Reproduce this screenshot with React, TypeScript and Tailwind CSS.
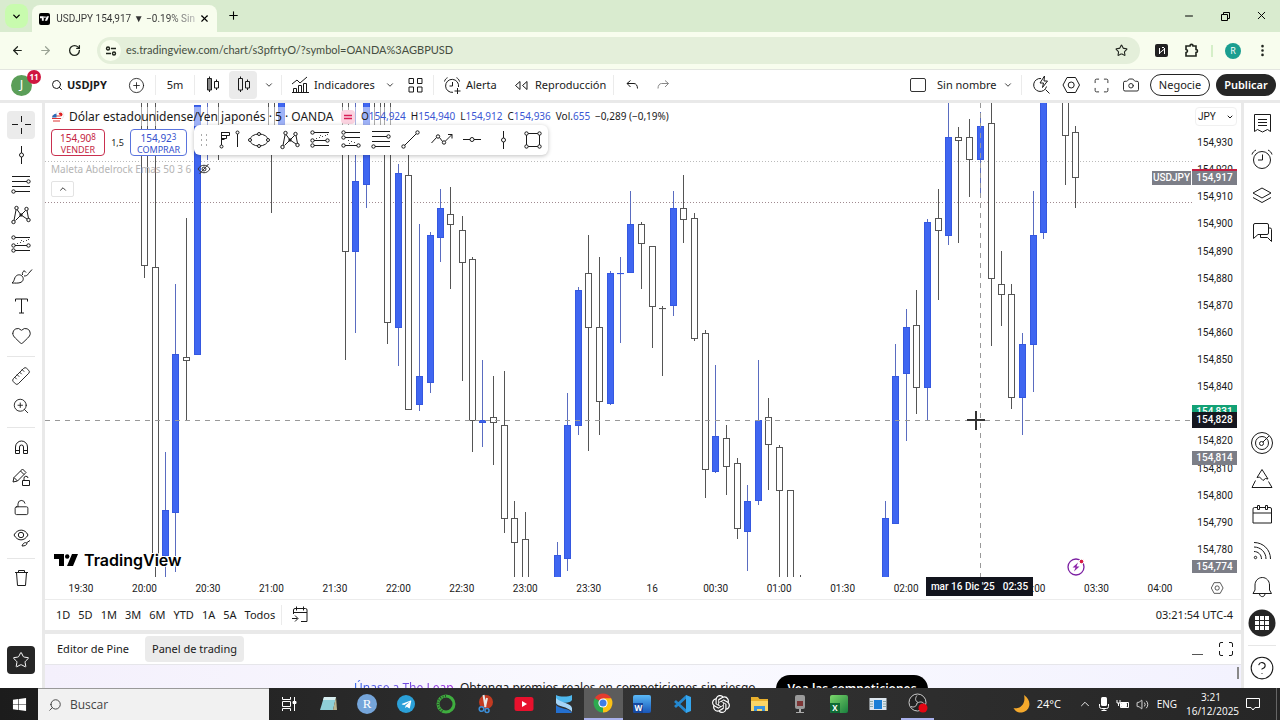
import type { ReactNode } from "react";
import {
  ArrowLeft,
  ArrowRight,
  Camera,
  ChevronDown,
  ChevronUp,
  CircleHelp,
  CirclePlus,
  Heart,
  LockOpen,
  Maximize,
  Minus,
  MoreVertical,
  Plus,
  RotateCw,
  Ruler,
  Search,
  Star,
  Volume2,
  X,
  ZoomIn,
} from "lucide-react";
import { FaTelegramPlane, FaWindows } from "react-icons/fa";
import { SiOpenai } from "react-icons/si";

type Kind = "up" | "down";

// kind, x, high, body top, body bottom, low
type Candle = [Kind, number, number, number, number, number];

const candles: Candle[] = [
  ["down", 144.5, 90, 90, 265, 278],
  ["down", 155.5, 90, 267, 555, 577],
  ["up", 165.5, 452, 510, 555, 577],
  ["up", 175.5, 284, 354, 512, 572],
  ["down", 186.5, 218, 357, 360, 420],
  ["up", 197.5, 105, 105, 354, 354],
  ["up", 207.5, 90, 90, 95, 160],
  ["down", 218.5, 90, 90, 95, 160],
  ["down", 271.5, 90, 90, 125, 213],
  ["up", 281.5, 90, 90, 124, 124],
  ["down", 345.5, 90, 90, 251, 360],
  ["up", 355.5, 90, 181, 251, 333],
  ["up", 366.5, 90, 90, 184, 208],
  ["down", 377.5, 90, 90, 127, 140],
  ["down", 387.5, 90, 90, 322, 344],
  ["up", 398.5, 164, 173, 327, 366],
  ["down", 408.5, 150, 175, 409, 409],
  ["up", 419.5, 224, 376, 404, 411],
  ["up", 430.5, 232, 235, 382, 393],
  ["up", 440.5, 189, 208, 237, 262],
  ["down", 450.5, 187, 214, 224, 289],
  ["down", 462.5, 216, 230, 262, 381],
  ["down", 472.5, 257, 259, 420, 452],
  ["up", 482.5, 360, 420, 422, 447],
  ["down", 493.5, 376, 417, 422, 465],
  ["down", 504.5, 371, 425, 518, 533],
  ["down", 514.5, 501, 518, 542, 577],
  ["down", 525.5, 512, 539, 590, 590],
  ["up", 557.5, 542, 555, 590, 590],
  ["up", 567.5, 393, 425, 558, 571],
  ["up", 578.5, 287, 290, 425, 435],
  ["down", 588.5, 235, 273, 327, 451],
  ["down", 599.5, 257, 327, 401, 435],
  ["up", 610.5, 271, 273, 403, 405],
  ["up", 620.5, 257, 273, 273, 343],
  ["up", 630.5, 191, 224, 272, 272],
  ["down", 641.5, 222, 224, 243, 289],
  ["down", 652.5, 246, 246, 306, 348],
  ["down", 662.5, 306, 308, 308, 376],
  ["up", 673.5, 191, 208, 305, 316],
  ["down", 683.5, 175, 208, 219, 243],
  ["down", 694.5, 213, 218, 338, 341],
  ["down", 705.5, 330, 333, 469, 498],
  ["up", 715.5, 365, 436, 471, 473],
  ["down", 726.5, 425, 438, 466, 495],
  ["down", 737.5, 458, 463, 528, 539],
  ["up", 747.5, 485, 501, 531, 571],
  ["up", 758.5, 360, 420, 500, 505],
  ["down", 768.5, 398, 417, 444, 490],
  ["down", 779.5, 445, 447, 490, 590],
  ["down", 790.5, 490, 490, 590, 590],
  ["down", 800.5, 575, 590, 590, 590],
  ["up", 885.5, 501, 518, 590, 590],
  ["up", 895.5, 344, 376, 523, 523],
  ["up", 906.5, 309, 327, 373, 441],
  ["down", 916.5, 290, 325, 387, 414],
  ["up", 927.5, 219, 222, 387, 421],
  ["down", 938.5, 189, 218, 230, 300],
  ["up", 948.5, 90, 137, 235, 245],
  ["down", 958.5, 127, 137, 140, 243],
  ["down", 969.5, 119, 137, 159, 197],
  ["up", 980.5, 112, 126, 159, 193],
  ["down", 991.5, 90, 123, 278, 346],
  ["down", 1001.5, 251, 284, 294, 326],
  ["down", 1011.5, 284, 294, 397, 409],
  ["up", 1022.5, 333, 344, 397, 435],
  ["up", 1033.5, 191, 235, 344, 392],
  ["up", 1043.5, 90, 90, 232, 239],
  ["down", 1065.5, 90, 90, 135, 185],
  ["down", 1075.5, 126, 132, 177, 208],
];

const prices = [
  "154,930", "154,920", "154,910", "154,900", "154,890", "154,880",
  "154,870", "154,860", "154,850", "154,840", "154,830", "154,820",
  "154,810", "154,800", "154,790", "154,780",
];

const times = [
  "19:30", "20:00", "20:30", "21:00", "21:30", "22:00", "22:30", "23:00", "23:30",
  "16", "00:30", "01:00", "01:30", "02:00", "02:30", "03:00", "03:30", "04:00",
];

const ranges = ["1D", "5D", "1M", "3M", "6M", "YTD", "1A", "5A", "Todos"];

function Icon({ children, className = "size-7" }: { children: ReactNode; className?: string }) {
  return (
    <svg
      viewBox="0 0 28 28"
      className={className}
      fill="none"
      stroke="currentColor"
      strokeWidth={1}
      aria-hidden="true"
    >
      {children}
    </svg>
  );
}

const CrossIcon = () => (
  <Icon>
    <path d="M14.5 5v6M14.5 17v6M5 13.5h6M18 13.5h6" />
  </Icon>
);

const VerticalLineIcon = () => (
  <Icon>
    <path d="M14.5 5v7M14.5 16v7" />
    <circle cx="14.5" cy="14" r="2" />
  </Icon>
);

const HorizontalLineIcon = () => (
  <Icon>
    <path d="M5 13.5h7M16 13.5h7" />
    <circle cx="14" cy="13.5" r="2" />
  </Icon>
);

const FibIcon = () => (
  <Icon>
    <path d="M5 5.5h18M5 10.5h15M5 15.5h18M8 20.5h15" />
    <circle cx="21.5" cy="10.5" r="1.7" />
    <circle cx="6.5" cy="20.5" r="1.7" />
  </Icon>
);

const PatternIcon = () => (
  <Icon>
    <path d="M7 19.500 9 9M10 8.500l4 5.500 4.500-4.500M8.500 19.500l5.500-5.500 6 4M20 9.500l1.500 8" />
    <circle cx="6.500" cy="21" r="1.700" />
    <circle cx="9.500" cy="7" r="1.700" />
    <circle cx="19.500" cy="8" r="1.700" />
    <circle cx="21.500" cy="19" r="1.700" />
    <circle cx="14" cy="14" r="1.200" />
  </Icon>
);

const ProjectionIcon = () => (
  <Icon>
    <path d="M8 6.5h15M8 14.5h12M8 19.5h15" />
    <path d="M10 12.5h1M13 11.5h1M16 10.5h1M19 9.5h1M14 9.5h1M21 8.5h1" strokeWidth={0.8} />
    <circle cx="6.5" cy="6.5" r="1.7" />
    <circle cx="6.5" cy="14.5" r="1.7" />
    <circle cx="21.5" cy="14.5" r="1.7" />
    <circle cx="6.5" cy="19.5" r="1.7" />
  </Icon>
);

const PositionIcon = () => (
  <Icon>
    <path d="M8 6.5h15M8 11.5h15M8 19.5h12" />
    <path d="M11 14.5h1M14 15.5h1M17 16.5h1M12 17.5h1" strokeWidth={0.8} />
    <circle cx="6.500" cy="6.500" r="1.700" />
    <circle cx="6.500" cy="11.500" r="1.700" />
    <circle cx="21.500" cy="19.500" r="1.700" />
    <circle cx="6.500" cy="19.500" r="1.700" />
  </Icon>
);

const BrushIcon = () => (
  <Icon>
    <path d="M5 22c2-1.500 2-3 3-5.500 1.500-3 5-3.500 7-1.500s1.500 5-1 6.300C11.500 22.500 8 22 5 22zM15.500 14c-.5-2 .5-4 2-4M17 15c2 0 3.500-.5 4.500-2.500L25 8.500M17 9.500l2 2" />
  </Icon>
);

const TextIcon = () => (
  <Icon>
    <path d="M8.500 10.500v-2.500h12v2.500M14.500 8v14M12 22h5" />
  </Icon>
);

const MagnetIcon = () => (
  <Icon>
    <path d="M8.500 20.500v-6.500a6 6 0 0 1 12 0v6.500h-4v-6.500a2 2 0 0 0-4 0v6.500zM8.500 17.500h4M16.500 17.500h4" />
  </Icon>
);

const PencilLockIcon = () => (
  <Icon>
    <path d="M6 19l1-4.500L15.500 6l3.500 3.500-8.500 8.500zM13.500 8l3.500 3.500M7 14.500l3.500 3.500M15.500 17.500h7v5h-7zM17 17.500v-2a2 2 0 0 1 4-.500" />
  </Icon>
);

const EyeIcon = () => (
  <Icon>
    <path d="M7 12c3.500-6.500 11-6.500 14 0-3.500 6.500-10.500 6.500-14 0z" />
    <circle cx="14" cy="12" r="2.700" />
    <path d="M15 23c1-3 3-4 5-3 0 2-2 3-5 3zM20 19.500l3-2" />
  </Icon>
);

const TrashIcon = () => (
  <Icon>
    <path d="M8 8.500h13M11.500 8.500v-2h6v2M9.500 8.500l1 13h8l1-13" />
  </Icon>
);

const VolumeProfileIcon = () => (
  <Icon>
    <path d="M6.500 6v13M6.500 6.500h8v3h-8M6.500 9.500h5v3h-5M6.500 13.500h3M22.500 8v13" />
    <circle cx="6.500" cy="20.500" r="1.500" />
    <circle cx="22.500" cy="6.500" r="1.500" />
  </Icon>
);

const EllipseIcon = () => (
  <Icon>
    <ellipse cx="14" cy="14" rx="9" ry="6" />
    <circle cx="14" cy="8" r="1.500" fill="white" />
    <circle cx="14" cy="20" r="1.500" fill="white" />
    <circle cx="5" cy="14" r="1.500" fill="white" />
    <circle cx="23" cy="14" r="1.500" fill="white" />
  </Icon>
);

const TrendLineIcon = () => (
  <Icon>
    <path d="M7.500 19.500 19 8" />
    <circle cx="6.500" cy="20.500" r="1.700" />
    <circle cx="20.500" cy="6.500" r="1.700" />
  </Icon>
);

const PathIcon = () => (
  <Icon>
    <path d="M3.500 17l5-5.500M11.500 11.500l3 4M17.500 15 24 8.500M20 8.500h4v4" />
    <circle cx="10" cy="10.500" r="1.700" />
    <circle cx="16" cy="16.500" r="1.700" />
  </Icon>
);

const RectIcon = () => (
  <Icon>
    <path d="M7.500 7.500h13v13h-13z" />
    <circle cx="7.500" cy="7.500" r="1.700" fill="white" />
    <circle cx="20.500" cy="7.500" r="1.700" fill="white" />
    <circle cx="7.500" cy="20.500" r="1.700" fill="white" />
    <circle cx="20.500" cy="20.500" r="1.700" fill="white" />
  </Icon>
);

const HexIcon = ({ className }: { className?: string }) => (
  <Icon className={className}>
    <path d="M10 6.500h8.500l4 7.500-4 7.500H10L6 14z" />
    <circle cx="14.200" cy="14" r="3" />
  </Icon>
);

const leftTools = [
  { label: "Cruz", icon: <CrossIcon />, active: true },
  { label: "Líneas de tendencia", icon: <VerticalLineIcon /> },
  { label: "Retroceso de Fibonacci", icon: <FibIcon /> },
  { label: "Patrones", icon: <PatternIcon /> },
  { label: "Predicción y medición", icon: <ProjectionIcon /> },
  { label: "Pincel", icon: <BrushIcon /> },
  { label: "Texto", icon: <TextIcon /> },
  { label: "Iconos", icon: <Heart size={21} strokeWidth={1.1} /> },
  null,
  { label: "Medir", icon: <Ruler size={20} strokeWidth={1.1} className="-scale-x-100" /> },
  { label: "Ampliar", icon: <ZoomIn size={18} strokeWidth={1.2} /> },
  null,
  { label: "Imán", icon: <MagnetIcon /> },
  { label: "Modo dibujo", icon: <PencilLockIcon /> },
  { label: "Bloquear", icon: <LockOpen size={17} strokeWidth={1.3} /> },
  { label: "Ocultar", icon: <EyeIcon /> },
  null,
  { label: "Eliminar", icon: <TrashIcon /> },
];

const drawingTools = [
  { label: "Perfil de volumen", icon: <VolumeProfileIcon /> },
  { label: "Elipse", icon: <EllipseIcon /> },
  { label: "Patrón XABCD", icon: <PatternIcon /> },
  { label: "Posición larga", icon: <ProjectionIcon /> },
  { label: "Posición corta", icon: <PositionIcon /> },
  { label: "Fibonacci", icon: <FibIcon /> },
  { label: "Línea de tendencia", icon: <TrendLineIcon /> },
  { label: "Trayectoria", icon: <PathIcon /> },
  { label: "Línea horizontal", icon: <HorizontalLineIcon /> },
  { label: "Línea vertical", icon: <VerticalLineIcon /> },
  { label: "Rectángulo", icon: <RectIcon /> },
];

const AlarmIcon = () => (
  <Icon>
    <circle cx="14" cy="15" r="8.500" />
    <path d="M14.500 9.500v5.500H10M4 9.500c.5-2 2-3.500 4-4.500M24 9.500c-.5-2-2-3.500-4-4.500" />
  </Icon>
);

const rightTop = [
  {
    label: "Lista de seguimiento",
    icon: (
      <Icon>
        <path d="M6.500 5.500h16v17l-3-2-5 2.500-5-2.500-3 2zM10 10.500h9M10 13.500h9M10 16.500h9" />
      </Icon>
    ),
  },
  { label: "Alertas", icon: <AlarmIcon /> },
  {
    label: "Capas",
    icon: (
      <Icon>
        <path d="M14 7l9 5-9 5-9-5zM5 16.500l9 5 9-5" />
      </Icon>
    ),
  },
  {
    label: "Chats",
    icon: (
      <Icon>
        <path d="M7 6.500h12a1.500 1.500 0 0 1 1.500 1.500v8a1.500 1.500 0 0 1-1.500 1.500H10l-4.500 4V8A1.500 1.500 0 0 1 7 6.500zM12.500 18v2.500h7l4 4V12.500a1.500 1.500 0 0 0-1.500-1.500h-1" />
      </Icon>
    ),
  },
];

const rightBottom = [
  {
    label: "Filtros",
    icon: (
      <Icon>
        <circle cx="14" cy="14" r="10.500" />
        <circle cx="14" cy="14" r="6.500" />
        <circle cx="13.500" cy="14.500" r="2" />
        <path d="M15 13l6-6" />
      </Icon>
    ),
  },
  {
    label: "Pine",
    icon: (
      <Icon>
        <path d="M9 12.500 14 4.500l6 9.500-2.500-.500-2.500 2-3.500-3.500zM7.500 15.500l-3.500 7h20l-3.500-6" />
      </Icon>
    ),
  },
  {
    label: "Calendarios",
    icon: (
      <Icon>
        <path d="M9 6.500H6.500a1.500 1.500 0 0 0-1.500 1.500v14h18.500V8a1.500 1.500 0 0 0-1.500-1.500h-2.500M11.500 6.500h5.500M5 12h18.500M9.500 4.500h2v4h-2zM17.500 4.500h2v4h-2z" />
      </Icon>
    ),
  },
  {
    label: "Noticias",
    icon: (
      <Icon>
        <path d="M6 5.500c9 0 16.500 7 16.500 16.500M6 10c6.500 0 12 5 12 12M6 14.500c4 0 7.500 3 7.500 7.500" />
        <circle cx="7.500" cy="20.500" r="1.200" />
      </Icon>
    ),
  },
  {
    label: "Notificaciones",
    icon: (
      <Icon>
        <path d="M5 20.500h18.500l-2-3.500v-5c0-4-3-7.500-7.200-7.500S7 8 7 12v5zM11.500 21c.5 3.500 5 3.500 5.500 0" />
      </Icon>
    ),
  },
];

function TradingViewMark({ className }: { className?: string }) {
  return (
    <svg viewBox="0 0 24 12" className={className} fill="currentColor" aria-hidden="true">
      <path d="M0 0h10v12H5V5H0zM18 0h6l-5 12h-6z" />
      <circle cx="13.200" cy="2.500" r="2.200" />
    </svg>
  );
}

function BrowserChrome() {
  return (
    <header className="shrink-0 font-['Open_Sans','Noto_Sans',sans-serif] text-[#3c443a]">
      <div className="flex h-8 items-end bg-[#d9ebcf]">
        <button
          aria-label="Buscar pestañas"
          className="mb-1 ml-[5px] flex h-6 w-[23px] items-center justify-center rounded-lg bg-[#c8fbae] text-black"
        >
          <ChevronDown size={11} strokeWidth={3} />
        </button>
        <div className="ml-1 flex h-[27px] w-[185px] items-center rounded-t-lg bg-[#f8fdee] pr-[3px] pl-[7px]">
          <span className="flex size-3 items-center justify-center rounded-xs bg-black">
            <TradingViewMark className="h-[5px] w-[9px] text-white" />
          </span>
          <span className="ml-1.5 flex-1 bg-linear-to-r from-[#333] from-80% to-[#bbb] bg-clip-text font-['Roboto',sans-serif] text-[10px] whitespace-nowrap text-transparent">
            USDJPY 154,917 ▼ −0.19% Sin
          </span>
          <button aria-label="Cerrar pestaña" className="p-1 text-black">
            <X size={11} strokeWidth={2.5} />
          </button>
        </div>
        <button aria-label="Nueva pestaña" className="mb-2.5 ml-2.5 text-black">
          <Plus size={13} strokeWidth={2} />
        </button>
        <div className="mb-2.5 ml-auto flex items-center gap-6 pr-3 text-black">
          <button aria-label="Minimizar">
            <Minus size={12} strokeWidth={2} />
          </button>
          <button aria-label="Restaurar">
            <svg viewBox="0 0 12 12" className="size-3" fill="none" stroke="currentColor">
              <path d="M2.500 4.500h6v6h-6zM4.500 4V2.500h6v6H9" />
            </svg>
          </button>
          <button aria-label="Cerrar">
            <X size={13} strokeWidth={1.8} />
          </button>
        </div>
      </div>

      <div className="flex h-[37px] items-center bg-[#f8fdee] pl-2.5 text-[#1f241d]">
        <button aria-label="Atrás" className="flex w-[29px] pl-px">
          <ArrowLeft size={13} strokeWidth={2.2} />
        </button>
        <button aria-label="Adelante" className="flex w-[29px] text-[#9aa394]">
          <ArrowRight size={13} strokeWidth={2.2} />
        </button>
        <button aria-label="Recargar" className="flex w-[29px]">
          <RotateCw size={13} strokeWidth={2.4} />
        </button>
        <div className="flex h-[27px] flex-1 items-center rounded-full bg-[#e4efda] pr-3 pl-[3px]">
          <span className="flex size-[21px] items-center justify-center rounded-full bg-[#f8fdee]">
            <svg viewBox="0 0 12 12" className="size-3" fill="none" stroke="currentColor" strokeWidth={1.4}>
              <circle cx="3" cy="3.500" r="1.500" />
              <circle cx="9" cy="8.500" r="1.500" />
              <path d="M6 3.500h5M1 8.500h5" />
            </svg>
          </span>
          <input
            aria-label="Dirección"
            defaultValue="es.tradingview.com/chart/s3pfrtyO/?symbol=OANDA%3AGBPUSD"
            className="ml-[5px] flex-1 bg-transparent font-['Lato','Open_Sans',sans-serif] text-[11px] text-[#454d41] outline-none"
          />
          <button aria-label="Marcador">
            <Star size={13} strokeWidth={2} />
          </button>
        </div>
        <span className="ml-[15px] flex size-[13px] items-center justify-center rounded-xs bg-[#222] text-white">
          <svg viewBox="0 0 12 12" className="size-3" fill="none" stroke="currentColor">
            <path d="M3.500 3v6M3.500 8l5-4M8.500 3v6M6 2.500h2" />
          </svg>
        </span>
        <button aria-label="Extensiones" className="ml-4">
          <svg viewBox="0 0 15 15" className="size-[15px]" fill="none" stroke="currentColor" strokeWidth={1.6}>
            <path d="M2 3h4c0-2.200 3-2.200 3 0h3v3.500c2 0 2 3 0 3V13H2v-3.500c2-.500 2-2.500 0-3z" />
          </svg>
        </button>
        <span className="ml-3 h-3 w-0.5 bg-[#d5efc8]" />
        <span className="ml-3 flex size-4 items-center justify-center rounded-full bg-[#1a9e90] text-[9px] text-white">
          R
        </span>
        <button aria-label="Menú" className="mr-2.5 ml-3.5">
          <MoreVertical size={15} strokeWidth={2.2} />
        </button>
      </div>
    </header>
  );
}

const Divider = () => <span className="h-5 w-px shrink-0 bg-[#ebebeb]" />;

function CandlesIcon({ filled }: { filled?: boolean }) {
  return (
    <Icon>
      <path d="M11.500 5.500v2M11.500 19v2M18.500 8.500v2M18.500 17v2" />
      <path d="M9.500 7.500h4V19h-4z" fill={filled ? "#888" : "none"} />
      <path d="M16.500 10.500h4V17h-4z" />
    </Icon>
  );
}

function TopBar() {
  return (
    <nav className="flex h-[31px] shrink-0 items-center border-t border-[#e3e6e0] bg-white text-[11px] whitespace-nowrap">
      <button
        aria-label="Perfil"
        className="relative ml-[11px] flex size-[21px] items-center justify-center rounded-full bg-[#5b9e58] text-[13px] text-white"
      >
        J
        <span className="absolute -top-[5px] left-4 flex h-3.5 w-3.5 items-center justify-center rounded-full bg-[#cf1740] text-[8px] font-bold">
          11
        </span>
      </button>
      <button className="ml-[19px] flex w-[73px] items-center gap-1 font-bold">
        <Search size={12} strokeWidth={2} />
        USDJPY
      </button>
      <button aria-label="Comparar" className="flex w-[31px] justify-start pl-1">
        <CirclePlus size={17} strokeWidth={1.2} />
      </button>
      <Divider />
      <button className="w-[38px]">5m</button>
      <Divider />
      <button aria-label="Velas" className="flex w-[34px] justify-center">
        <CandlesIcon filled />
      </button>
      <button aria-label="Velas huecas" className="flex size-7 items-center justify-center rounded bg-[#ebebeb]">
        <CandlesIcon />
      </button>
      <button aria-label="Más tipos" className="flex w-6 justify-center">
        <ChevronDown size={10} />
      </button>
      <Divider />
      <button className="ml-1 flex items-center">
        <Icon>
          <path d="M7.500 21.500v-4h3v4zM12.500 21.500v-7h3v7zM17.500 21.500v-9h3v9zM6 21.500h17M6 13l5-4 3 3 7-6" />
        </Icon>
        <span className="w-[61px] text-left">Indicadores</span>
      </button>
      <button aria-label="Plantillas" className="ml-1 flex w-[22px] justify-center">
        <ChevronDown size={10} />
      </button>
      <button aria-label="Disposición" className="flex w-7 justify-center">
        <Icon>
          <path d="M8 7.500h4.500v5H8zM16.500 7.500h4.500v5h-4.500zM8 16h4.500v5H8zM16.500 16h4.500v5h-4.500z" />
        </Icon>
      </button>
      <span className="w-1" />
      <Divider />
      <button className="ml-1 flex items-center">
        <Icon>
          <path d="M20.500 16a6.500 6.500 0 1 0-5.500 5.300M14.500 11v4h-3M6.500 10.500c.5-2 1.500-3 3-3.800M21.500 10.500c-.5-2-1.500-3-3-3.800M19.500 17v6M16.500 20h6" />
        </Icon>
        <span className="w-[37px] text-left">Alerta</span>
      </button>
      <button className="ml-1 flex items-center">
        <Icon>
          <path d="M13 10.500v8L8.500 14.500zM20 10.500v8L15.500 14.500z" />
        </Icon>
        <span className="w-[78px] text-left">Reproducción</span>
      </button>
      <Divider />
      <button aria-label="Deshacer" className="ml-0.5 flex w-[31px] justify-center">
        <Icon>
          <path d="M12.500 9.500 9 12.500l3.500 3.500M9 12.500h7c2 0 3.500 2 3.500 5" />
        </Icon>
      </button>
      <button aria-label="Rehacer" className="flex w-[31px] justify-center text-[#888]">
        <Icon>
          <path d="M16 9.500l3.500 3-3.500 3.500M19.500 12.500h-7c-2 0-3.500 2-3.500 5" />
        </Icon>
      </button>

      <div className="ml-auto flex items-center pr-1">
        <button className="flex items-center">
          <span className="h-3.5 w-4 rounded-xs border border-[#333]" />
          <span className="ml-[11px] w-[60px] text-left">Sin nombre</span>
          <ChevronDown size={10} className="ml-1.5" />
        </button>
        <span className="w-2" />
        <Divider />
        <button aria-label="Búsqueda rápida" className="ml-1 flex w-[30px] justify-center">
          <Icon>
            <path d="M14 7.500a6.500 6.500 0 1 0 5.500 8M18.500 18.500l4 4M17.500 5l-4.500 7h3.500l-1 4.500 5-6.500h-3.500z" />
          </Icon>
        </button>
        <button aria-label="Ajustes" className="flex w-[30px] justify-center">
          <HexIcon />
        </button>
        <button aria-label="Pantalla completa" className="flex w-[30px] justify-center">
          <Maximize size={17} strokeWidth={1.2} />
        </button>
        <button aria-label="Captura" className="flex w-[30px] justify-center">
          <Camera size={18} strokeWidth={1.2} />
        </button>
        <button className="ml-1 h-[22px] w-[60px] rounded-full border border-[#222]">Negocie</button>
        <button className="ml-1.5 h-[22px] w-[60px] rounded-full bg-[#262626] font-semibold text-white">
          Publicar
        </button>
      </div>
    </nav>
  );
}

function LeftToolbar() {
  return (
    <aside className="flex w-[42px] shrink-0 flex-col items-center bg-white pt-[7px]">
      {leftTools.map((tool, i) =>
        tool ? (
          <button key={tool.label} aria-label={tool.label} className="flex h-[30px] w-full items-center justify-center">
            <span
              className={
                tool.active
                  ? "flex size-7 items-center justify-center rounded bg-[#ebebeb]"
                  : "flex size-7 items-center justify-center"
              }
            >
              {tool.icon}
            </span>
          </button>
        ) : (
          <span key={i} className="mt-1.5 mb-1 h-px w-7 bg-[#e6e6e6]" />
        )
      )}
      <button
        aria-label="Favoritos"
        className="mt-auto mb-3.5 flex size-7 items-center justify-center rounded bg-[#262626] text-white"
      >
        <Star size={18} strokeWidth={1.3} />
      </button>
    </aside>
  );
}

function RightToolbar() {
  return (
    <aside className="flex w-9 shrink-0 flex-col items-center bg-white py-0.5">
      {rightTop.map((tool) => (
        <button key={tool.label} aria-label={tool.label} className="flex h-9 items-center">
          {tool.icon}
        </button>
      ))}
      <div className="mt-auto" />
      {rightBottom.map((tool) => (
        <button key={tool.label} aria-label={tool.label} className="flex h-9 items-center">
          {tool.icon}
        </button>
      ))}
      <button aria-label="Productos" className="flex h-9 items-center">
        <svg viewBox="0 0 28 28" className="size-7">
          <circle cx="14" cy="14" r="13.500" fill="#262626" />
          <path
            d="M7 7h4v4H7zM12 7h4v4h-4zM17 7h4v4h-4zM7 12h4v4H7zM12 12h4v4h-4zM17 12h4v4h-4zM7 17h4v4H7zM12 17h4v4h-4zM17 17h4v4h-4z"
            fill="white"
          />
        </svg>
      </button>
      <span className="my-1 h-px w-7 bg-[#e6e6e6]" />
      <button aria-label="Ayuda" className="flex h-9 items-center">
        <CircleHelp size={26} strokeWidth={1} />
      </button>
    </aside>
  );
}

function Candlesticks() {
  return (
    <svg className="block size-full" aria-label="Gráfico de velas USDJPY">
      <line x1="0" x2="100%" y1="58.5" y2="58.5" stroke="#bbb" strokeDasharray="1 2" />
      <line x1="0" x2="100%" y1="99.5" y2="99.5" stroke="#a08a90" strokeDasharray="1 2" />
      <g transform="translate(-45 -103)">
        {candles.map(([kind, x, high, top, bottom, low]) => {
          const up = kind === "up";
          return (
            <g key={x}>
              <line x1={x} x2={x} y1={high} y2={low} stroke={up ? "#5a6cc0" : "#555"} />
              <rect
                x={x - 3}
                y={top + 0.5}
                width={6}
                height={Math.max(bottom - top, 0.1)}
                fill={up ? "#3f66f1" : "#fff"}
                stroke={up ? "#3558e0" : "#555"}
              />
            </g>
          );
        })}
      </g>
      <line x1="0" x2="100%" y1="317.5" y2="317.5" stroke="#999" strokeDasharray="5 5" />
      <line x1="935.5" x2="935.5" y1="0" y2="100%" stroke="#999" strokeDasharray="5 5" />
      <path d="M922 317h18M931 308v19" stroke="#333" strokeWidth={2} />
    </svg>
  );
}

function Quote({ name, value }: { name: string; value: string }) {
  return (
    <span>
      {name}
      <span className="text-[#3a56d4]">{value}</span>
    </span>
  );
}

function Legend() {
  return (
    <div className="absolute top-1 left-1.5">
      <div className="flex h-[19px] w-fit items-center bg-white/50 text-[10px] whitespace-nowrap">
        <svg viewBox="0 0 14 14" className="size-3.5">
          <circle cx="9" cy="5" r="4" fill="#fff" stroke="#ddd" strokeWidth=".5" />
          <circle cx="9.500" cy="4.500" r="2" fill="#d22" />
          <circle cx="5.500" cy="8" r="4.500" fill="#fff" />
          <path d="M1.500 6h8M1 8.500h9M2 11h7" stroke="#d33" />
          <path d="M1.500 6a4.500 4.500 0 0 1 4-2.500v4H1z" fill="#2b6bb5" />
        </svg>
        <h1 className="ml-1 w-[268px] text-[12px]">Dólar estadounidense/Yen japonés · 5 · OANDA</h1>
        <span className="ml-1 flex size-3.5 items-center justify-center rounded bg-[#fbd3e0]">
          <svg viewBox="0 0 8 8" className="size-2" stroke="#d81e56" strokeWidth={1.5}>
            <path d="M0 2.500h8M0 5.500h8" />
          </svg>
        </span>
        <div className="ml-1.5 flex gap-[5px]">
          <Quote name="O" value="154,924" />
          <Quote name="H" value="154,940" />
          <Quote name="L" value="154,912" />
          <Quote name="C" value="154,936" />
          <Quote name="Vol." value="655" />
          <span>−0,289 (−0,19%)</span>
        </div>
      </div>

      <div className="mt-[3px] flex items-center text-[10px] leading-[11px]">
        <button className="h-[27px] w-[54px] rounded border border-[#c9304f] bg-white text-[#c41f42]">
          <span className="block">
            154,90<span className="align-[2px] text-[8px]">8</span>
          </span>
          <span className="block text-[9px]">VENDER</span>
        </button>
        <span className="w-[25px] text-center text-[9px]">1,5</span>
        <button className="h-[27px] w-[57px] rounded border border-[#5a74dd] bg-white text-[#3450cc]">
          <span className="block">
            154,92<span className="align-[2px] text-[8px]">3</span>
          </span>
          <span className="block text-[9px]">COMPRAR</span>
        </button>
      </div>

      <div className="mt-1 flex h-[18px] items-center gap-2 text-[10px] text-[#b5b5b5]">
        <span className="w-[138px] whitespace-nowrap">Maleta Abdelrock Emas 50 3 6</span>
        <svg viewBox="0 0 14 14" className="size-3.5" fill="none" stroke="#333">
          <path d="M1 7c3-5 9-5 12 0-3 5-9 5-12 0zM11.500 2l-9 10" />
          <circle cx="7" cy="7" r="2" />
        </svg>
      </div>
      <button
        aria-label="Ocultar leyenda"
        className="mt-[3px] flex h-4 w-[23px] items-center justify-center rounded-xs border border-[#e3e3e3] bg-white"
      >
        <ChevronUp size={10} strokeWidth={2} />
      </button>
    </div>
  );
}

function DrawingToolbar() {
  return (
    <div className="absolute top-[22px] left-[149px] flex h-[30px] w-[354px] items-center rounded-md bg-white shadow-[0_1px_4px_rgba(0,0,0,0.25)]">
      <svg viewBox="0 0 8 12" className="ml-1.5 h-3 w-2" fill="#aaa">
        <path d="M1 0h1v2H1zM6 0h1v2H6zM1 5h1v2H1zM6 5h1v2H6zM1 10h1v2H1zM6 10h1v2H6z" />
      </svg>
      <div className="mr-px ml-[7px] flex flex-1 items-center justify-between">
        {drawingTools.map((tool) => (
          <button key={tool.label} aria-label={tool.label}>
            {tool.icon}
          </button>
        ))}
      </div>
    </div>
  );
}

function PriceAxis() {
  return (
    <div className="relative w-[49px] shrink-0 font-['Roboto',sans-serif] text-[10px]">
      <div className="flex h-full flex-col justify-between pt-8 pb-[19px] pl-[3px]">
        {prices.map((price) => (
          <span key={price} className="w-10 text-center leading-4">
            {price}
          </span>
        ))}
      </div>
      <label className="absolute top-1 left-[3px] flex h-[19px] w-[42px] items-center rounded border border-[#f0f0f0] bg-white">
        <select aria-label="Divisa" className="w-full appearance-none bg-transparent pl-0.5 text-[10px] outline-none">
          <option>JPY</option>
        </select>
        <ChevronDown size={8} strokeWidth={3} className="pointer-events-none absolute right-0.5" />
      </label>
      <div className="absolute top-[66px] right-1 flex gap-px leading-[14px] font-medium text-white">
        <span className="mt-0.5 w-[39px] bg-[#7c7e87] text-center">USDJPY</span>
        <span className="w-[45px] border-t-2 border-[#c41f42] bg-[#7c7e87] text-center">154,917</span>
      </div>
      <span className="absolute top-[302px] left-0 w-[45px] bg-[#12a175] text-center leading-[14px] font-medium text-white">
        154,831
      </span>
      <span className="absolute top-[309px] left-0 w-[45px] bg-[#15171f] text-center leading-4 font-medium text-white">
        154,828
      </span>
      <span className="absolute top-[348px] left-0 w-[45px] bg-[#7c7e87] text-center leading-[14px] font-medium text-white">
        154,814
      </span>
      <span className="absolute top-[457px] left-0 w-[45px] bg-[#7c7e87] text-center leading-[13px] font-medium text-white">
        154,774
      </span>
    </div>
  );
}

function ChartPanel() {
  return (
    <section className="flex min-h-0 flex-1 flex-col bg-white">
      <div className="flex min-h-0 flex-1">
        <div className="relative min-w-0 flex-1 overflow-hidden">
          <Candlesticks />
          <Legend />
          <DrawingToolbar />
          <div className="absolute bottom-[7px] left-[9px] flex items-center gap-1.5 text-black">
            <TradingViewMark className="h-3 w-6" />
            <span className="font-['Inter',sans-serif] text-[16px] leading-5 font-semibold [paint-order:stroke] [-webkit-text-stroke:2px_white]">
              TradingView
            </span>
          </div>
          <svg viewBox="0 0 18 18" className="absolute right-[107px] bottom-px size-[18px]">
            <circle cx="9" cy="9" r="8" fill="#fff" stroke="#7b1fa2" strokeWidth="1.300" />
            <path d="M11 4.500 5.500 9.500h3L7 13.500l5.500-5h-3z" fill="#8e24aa" />
            <circle cx="14.500" cy="3.500" r="2.300" fill="#d81b45" stroke="#fff" />
          </svg>
        </div>
        <PriceAxis />
      </div>

      <div className="relative flex h-[22px] shrink-0 items-center font-['Roboto',sans-serif] text-[10px]">
        <div className="flex flex-1 justify-between pr-2 pl-3">
          {times.map((time) => (
            <span key={time} className="w-12 text-center">
              {time}
            </span>
          ))}
        </div>
        <button aria-label="Ajustes de escala" className="flex w-[49px] justify-center">
          <HexIcon className="size-5" />
        </button>
        <span className="absolute top-0 left-[881px] flex h-[19px] w-[107px] items-center justify-center gap-2 bg-[#12141d] font-medium whitespace-nowrap text-white">
          <span>mar 16 Dic '25</span>
          <span>02:35</span>
        </span>
      </div>
    </section>
  );
}

function BottomPanels() {
  return (
    <>
      <div className="flex h-[31px] shrink-0 items-center border-t border-[#ececec] bg-white px-2 text-[11px]">
        <div className="flex gap-2 pl-[3px]">
          {ranges.map((range) => (
            <button key={range}>{range}</button>
          ))}
        </div>
        <span className="mr-1 ml-1.5 h-5 w-px bg-[#ebebeb]" />
        <button aria-label="Ir a la fecha">
          <Icon>
            <path d="M7.500 13V9A1.500 1.500 0 0 1 9 7.500h10.500A1.500 1.500 0 0 1 21 9v11.500h-6M7.500 11.500H21M10.500 5.500v4M17.500 5.500v4M6 17.500h5.500M9 14.500l3 3-3 3" />
          </Icon>
        </button>
        <button className="ml-auto">03:21:54 UTC-4</button>
      </div>
      <div className="mt-1 flex h-[30px] shrink-0 items-center bg-white pr-2 pl-3 text-[11px]">
        <button className="w-[76px] text-left whitespace-nowrap">Editor de Pine</button>
        <button className="ml-3 h-[26px] w-[99px] rounded bg-[#ebebeb] whitespace-nowrap">Panel de trading</button>
        <button aria-label="Minimizar panel" className="mt-2.5 mr-4 ml-auto h-px w-[11px] bg-[#555]" />
        <button aria-label="Maximizar panel">
          <svg viewBox="0 0 14 14" className="size-3.5" fill="none" stroke="currentColor">
            <path d="M.5 5V2A1.500 1.500 0 0 1 2 .5h2M10 .5h2A1.500 1.500 0 0 1 13.500 2v3M13.500 9v3a1.500 1.500 0 0 1-1.500 1.500h-2M4 13.500H2A1.500 1.500 0 0 1 .5 12V9" />
          </svg>
        </button>
      </div>
      <div className="relative flex h-6 shrink-0 items-start justify-center overflow-hidden border-t border-[#e6e6ea] bg-linear-to-r from-[#f4f0fc] via-[#fafaff] to-[#f3f2fe] pr-1">
        <p className="mt-[13px] w-[406px] text-[12px] leading-5 whitespace-nowrap">
          <a href="#leap" className="bg-linear-to-r from-[#2c62e8] to-[#9a20d8] bg-clip-text text-transparent">
            Únase a The Leap.
          </a>{" "}
          Obtenga premios reales en competiciones sin riesgo.
        </p>
        <button className="mt-2.5 ml-4 h-7 w-[152px] rounded-[14px] bg-black text-[12px] font-semibold text-white">
          Vea las competiciones
        </button>
        <span className="absolute top-0.5 right-0.5 h-3 w-0.5 bg-[#888]" />
      </div>
    </>
  );
}

const taskIcons: { name: string; icon: ReactNode; active?: boolean; recording?: boolean }[] = [
  {
    name: "Vista de tareas",
    icon: (
      <svg viewBox="0 0 20 20" className="size-5" fill="none" stroke="white">
        <path d="M3.500 3v2.500h8V3M3.500 17v-2.500h8V17M3.500 7.500h8v5h-8zM15.500 3v14" />
        <path d="M14 7.500h3v2h-3z" fill="white" />
      </svg>
    ),
  },
  {
    name: "Bloc de notas",
    icon: (
      <svg viewBox="0 0 20 20" className="size-5">
        <path d="M6 3h12l-3 13H2z" fill="#8fd0d8" />
        <path d="M6 3h12l-1 3H5z" fill="#d7eef0" />
        <path d="M15 16l3-13 1 13z" fill="#b9b48f" />
      </svg>
    ),
  },
  {
    name: "R",
    icon: (
      <span className="flex size-5 items-center justify-center rounded-full bg-[#75a5da] font-['Liberation_Serif',serif] text-[13px] text-white">
        R
      </span>
    ),
  },
  {
    name: "Telegram",
    icon: (
      <span className="flex size-[18px] items-center justify-center rounded-full bg-[#2ba0d8] text-white">
        <FaTelegramPlane size={11} />
      </span>
    ),
  },
  {
    name: "Anaconda",
    icon: (
      <svg viewBox="0 0 20 20" className="size-5" fill="none">
        <circle cx="10" cy="10" r="8" stroke="#3fae3f" strokeWidth="3" />
        <path d="M10 2a8 8 0 0 0-2.500 15.600" stroke="#2a4a2a" strokeWidth="2" strokeDasharray="1 1.500" />
      </svg>
    ),
  },
  {
    name: "Recortes",
    icon: (
      <svg viewBox="0 0 20 20" className="size-5" fill="none">
        <circle cx="11" cy="8" r="7" fill="#c23b22" />
        <path d="M8.500 1l2 12M12 4l-2 9" stroke="#e8e8e8" strokeWidth="2" />
        <circle cx="6.500" cy="15" r="2.300" stroke="#3d8fd8" strokeWidth="1.500" />
        <circle cx="12" cy="16.500" r="2" stroke="#3d8fd8" strokeWidth="1.500" />
      </svg>
    ),
  },
  {
    name: "YouTube",
    icon: (
      <svg viewBox="0 0 20 20" className="size-5">
        <rect x="0.500" y="3" width="19" height="14" rx="2.500" fill="#e8112d" />
        <path d="M8 7l5 3-5 3z" fill="white" />
      </svg>
    ),
  },
  {
    name: "Editor",
    icon: (
      <svg viewBox="0 0 20 20" className="size-5">
        <path d="M2 1c4 2 12 2 16 0v5c-2 4-12 3-16 0z" fill="#4fb8ee" />
        <path d="M2 4c5 5 15 5 16 10v4C14 12 3 13 2 9z" fill="#a5d5f8" />
        <path d="M2 11c3 4 14 3 16 8H2z" fill="#2470d0" />
      </svg>
    ),
  },
  {
    name: "Chrome",
    active: true,
    icon: (
      <svg viewBox="0 0 20 20" className="size-5">
        <path d="M10 10 1.800 5.300A9.500 9.500 0 0 1 18.200 5.300z" fill="#e33b2e" />
        <path d="M10 10 18.200 5.300A9.500 9.500 0 0 1 10 19.500z" fill="#fbc116" />
        <path d="M10 10v9.500A9.500 9.500 0 0 1 1.800 5.300z" fill="#2da94f" />
        <path d="M10 5.300h8.200l-4 6z" fill="#fbc116" />
        <circle cx="10" cy="10" r="4.600" fill="white" />
        <circle cx="10" cy="10" r="3.500" fill="#3f7de8" />
      </svg>
    ),
  },
  {
    name: "Word",
    icon: (
      <span className="relative block size-[18px] overflow-hidden rounded-xs bg-linear-to-b from-[#5bb8f5] to-[#1a55b8]">
        <span className="absolute bottom-0 left-0 flex h-2.5 w-2.5 items-center justify-center bg-[#1748a0] text-[8px] font-bold text-white">
          W
        </span>
      </span>
    ),
  },
  {
    name: "Visual Studio Code",
    icon: (
      <svg viewBox="0 0 20 20" className="size-5" fill="none">
        <path d="M15 2 3 13M3 7l12 11" stroke="#2488d0" strokeWidth="2.800" />
        <path d="M14 1l5 2v14l-5 2z" fill="#35a6ee" />
      </svg>
    ),
  },
  { name: "ChatGPT", icon: <SiOpenai size={18} color="#fff" /> },
  {
    name: "Explorador",
    icon: (
      <svg viewBox="0 0 20 20" className="size-5">
        <path d="M1 3h7l1.500 2H18v12H1z" fill="#e9b02d" />
        <path d="M1 7h17v10H1z" fill="#fad566" />
        <path d="M4 17v-5h11v5h-3v-2H7v2z" fill="#3a93dd" />
      </svg>
    ),
  },
  {
    name: "Micrófono",
    icon: (
      <svg viewBox="0 0 20 20" className="size-5">
        <rect x="5" y="1" width="10" height="14" rx="2" fill="#9a9a9a" />
        <rect x="7" y="7" width="6" height="5" fill="#7d3636" />
        <path d="M9 15h2v3h3v1H6v-1h3z" fill="#aaa" />
      </svg>
    ),
  },
  {
    name: "Excel",
    icon: (
      <span className="relative block size-[18px] overflow-hidden rounded-xs bg-linear-to-br from-[#7bd86c] to-[#14803e]">
        <span className="absolute bottom-0 left-0 flex h-2.5 w-2.5 items-center justify-center bg-[#0e6b35] text-[8px] font-bold text-white">
          X
        </span>
      </span>
    ),
  },
  {
    name: "Ventana",
    icon: (
      <svg viewBox="0 0 20 20" className="size-5">
        <path d="M1.500 4h17v12h-17z" fill="#dde6ee" />
        <path d="M6 6h8v9H6z" fill="#1c7fd6" />
        <path d="M2 7.500h3M2 10h3M2 12.500h3M15 7.500h3M15 10h3M15 12.500h3" stroke="#8aa" />
      </svg>
    ),
  },
  {
    name: "OBS",
    recording: true,
    icon: (
      <svg viewBox="0 0 20 20" className="size-5" fill="none" stroke="#ccc">
        <circle cx="9.500" cy="9.500" r="8.500" fill="#222" />
        <path d="M10 9.500C7 8 7 5 9 2.500M9.500 10c3-2 6-1 7.500 2M9 10c0 3-3 5-6 3.500" />
        <circle cx="15" cy="15" r="4.500" fill="#e30613" stroke="none" />
      </svg>
    ),
  },
];

function Taskbar() {
  return (
    <footer className="flex h-8 shrink-0 items-center bg-linear-to-r from-[#1c1c1c] via-[#333] to-[#262626] font-['Open_Sans','Noto_Sans',sans-serif] text-white">
      <button aria-label="Inicio" className="flex w-[38px] justify-center">
        <FaWindows size={15} />
      </button>
      <label className="flex h-full w-[231px] items-center border-t border-[#999] bg-[#f1f1f1] pl-2.5 text-[#333]">
        <Search size={14} strokeWidth={1.5} className="-scale-x-100" />
        <input
          aria-label="Buscar"
          placeholder="Buscar"
          className="ml-2 w-40 bg-transparent text-[12px] outline-none placeholder:text-[#444]"
        />
      </label>
      <div className="flex h-full w-[668px] justify-between">
        {taskIcons.map((app) => (
          <button
            key={app.name}
            aria-label={app.name}
            className={
              app.active
                ? "flex w-[39px] items-center justify-center border-b-2 border-[#a9b1ec] bg-[#5c5c5c]"
                : app.recording
                  ? "mx-[3px] flex w-[33px] items-center justify-center border-b-2 border-[#a9b1ec]"
                  : "flex w-[39px] items-center justify-center"
            }
          >
            {app.icon}
          </button>
        ))}
      </div>
      <div className="ml-auto flex h-full items-center text-[11px]">
        <svg viewBox="0 0 20 20" className="size-5">
          <path d="M12 1c8 5 7 16-2 17.500C6 19 3 17 1.500 14 9 15.500 14 9 12 1z" fill="#f5a92c" />
        </svg>
        <span className="ml-[5px] w-[29px]">24°C</span>
        <ChevronUp size={14} strokeWidth={1.5} className="ml-3" />
        <svg viewBox="0 0 12 16" className="ml-1.5 h-4 w-3">
          <rect x="3" y="1" width="6" height="9" rx="1.500" fill="white" />
          <path d="M1.500 8v2.500a2 2 0 0 0 2 2h5a2 2 0 0 0 2-2V8M6 12.500V15M3.500 14.500h5" stroke="white" fill="none" />
        </svg>
        <svg viewBox="0 0 14 12" className="ml-1.5 h-3 w-3.5" fill="none" stroke="white">
          <path d="M4.500 4.500h8v5h-8z" />
          <path d="M5.500 5.500h5v3h-5z" fill="white" />
          <path d="M1 2v3h3V2M2.500 5v3" />
        </svg>
        <Volume2 size={13} strokeWidth={1.5} className="ml-1.5" />
        <span className="ml-2 text-[10px]">ENG</span>
        <div className="ml-[9px] w-[50px] text-center text-[10px] leading-[14px] whitespace-nowrap">
          <div>3:21</div>
          <div>16/12/2025</div>
        </div>
        <button aria-label="Notificaciones" className="ml-2.5">
          <svg viewBox="0 0 14 14" className="size-3.5" fill="none" stroke="white">
            <path d="M.5 1.500h13v9H9l-2 2.500-2-2.500H.5z" />
          </svg>
        </button>
        <span className="mr-[3px] ml-4 h-full w-px bg-[#666]" />
      </div>
    </footer>
  );
}

export default function App() {
  return (
    <div className="flex h-screen flex-col overflow-hidden bg-[#e9e9e9] font-['Noto_Sans','Open_Sans',sans-serif] text-[#1a1a1a]">
      <BrowserChrome />
      <TopBar />
      <div className="flex min-h-0 flex-1 gap-[3px] pt-[3px]">
        <LeftToolbar />
        <main className="flex min-w-0 flex-1 flex-col">
          <ChartPanel />
          <BottomPanels />
        </main>
        <RightToolbar />
      </div>
      <Taskbar />
    </div>
  );
}
